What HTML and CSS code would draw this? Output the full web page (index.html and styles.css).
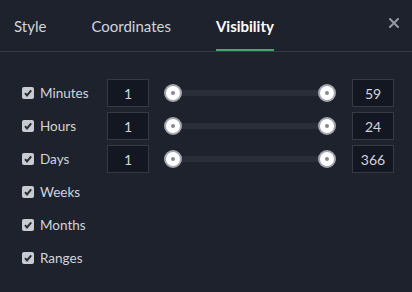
FILE: index.html
```
<!DOCTYPE html>
<html>
<head>
<meta charset="utf-8">
<link rel="stylesheet" href="styles.css">
</head>
<body>
<div class="dialog">
  <div class="header">
    <div class="tab">Style</div>
    <div class="tab">Coordinates</div>
    <div class="tab active">Visibility</div>
    <div class="close"><svg width="10" height="10" viewBox="0 0 10 10"><path d="M1 1L9 9M9 1L1 9" stroke="#9598a1" stroke-width="2" stroke-linecap="square"/></svg></div>
  </div>
  <div class="body">
    <div class="row">
      <label class="lbl"><span class="cb"><svg width="12" height="12" viewBox="0 0 12 12"><path d="M3 6.2L5 8.4L9.2 3.4" fill="none" stroke="#2a2e39" stroke-width="2"/></svg></span>Minutes</label>
      <div class="num">1</div>
      <div class="slider"><span class="track"></span><span class="thumb"></span><span class="thumb"></span></div>
      <div class="num">59</div>
    </div>
    <div class="row">
      <label class="lbl"><span class="cb"><svg width="12" height="12" viewBox="0 0 12 12"><path d="M3 6.2L5 8.4L9.2 3.4" fill="none" stroke="#2a2e39" stroke-width="2"/></svg></span>Hours</label>
      <div class="num">1</div>
      <div class="slider"><span class="track"></span><span class="thumb"></span><span class="thumb"></span></div>
      <div class="num">24</div>
    </div>
    <div class="row">
      <label class="lbl"><span class="cb"><svg width="12" height="12" viewBox="0 0 12 12"><path d="M3 6.2L5 8.4L9.2 3.4" fill="none" stroke="#2a2e39" stroke-width="2"/></svg></span>Days</label>
      <div class="num">1</div>
      <div class="slider"><span class="track"></span><span class="thumb"></span><span class="thumb"></span></div>
      <div class="num">366</div>
    </div>
    <div class="row">
      <label class="lbl"><span class="cb"><svg width="12" height="12" viewBox="0 0 12 12"><path d="M3 6.2L5 8.4L9.2 3.4" fill="none" stroke="#2a2e39" stroke-width="2"/></svg></span>Weeks</label>
    </div>
    <div class="row">
      <label class="lbl"><span class="cb"><svg width="12" height="12" viewBox="0 0 12 12"><path d="M3 6.2L5 8.4L9.2 3.4" fill="none" stroke="#2a2e39" stroke-width="2"/></svg></span>Months</label>
    </div>
    <div class="row">
      <label class="lbl"><span class="cb"><svg width="12" height="12" viewBox="0 0 12 12"><path d="M3 6.2L5 8.4L9.2 3.4" fill="none" stroke="#2a2e39" stroke-width="2"/></svg></span>Ranges</label>
    </div>
  </div>
</div>
</body>
</html>
```
FILE: styles.css
```
html, body {
  margin: 0;
  padding: 0;
  background: #1e222d;
}
body {
  width: 412px;
  height: 292px;
  overflow: hidden;
  font-family: Lato, "Noto Sans", sans-serif;
  color: #d1d4dc;
}
.dialog {
  display: flex;
  flex-direction: column;
}
.header {
  display: flex;
  height: 52px;
  box-sizing: border-box;
  border-bottom: 1px solid #363a45;
  padding-left: 14px;
  position: relative;
}
.tab {
  display: flex;
  align-items: center;
  padding-top: 2px;
  margin-right: 45px;
  font-size: 15px;
  color: #d1d4dc;
  border-bottom: 2px solid transparent;
  box-sizing: border-box;
}
.tab.active {
  font-weight: bold;
  color: #ffffff;
  border-bottom-color: #45a874;
}
.close {
  position: absolute;
  right: 13px;
  top: 18px;
  width: 10px;
  height: 10px;
}
.close svg { display: block; }
.body {
  display: flex;
  flex-direction: column;
  gap: 5px;
  padding: 27px 18px 0 22px;
}
.row {
  display: flex;
  align-items: center;
  height: 28px;
}
.lbl {
  display: flex;
  align-items: center;
  width: 85px;
  font-size: 13.5px;
  color: #d1d4dc;
}
.cb {
  width: 12px;
  height: 12px;
  border-radius: 2px;
  background: #c9cbd0;
  margin-right: 6px;
  display: block;
}
.cb svg { display: block; }
.num {
  width: 42px;
  height: 28px;
  box-sizing: border-box;
  background: #131722;
  border: 1px solid #363a45;
  display: flex;
  align-items: center;
  justify-content: center;
  font-size: 14px;
  color: #d1d4dc;
}
.slider {
  width: 172px;
  margin: 0 16px 0 15px;
  height: 18px;
  display: flex;
  justify-content: space-between;
  align-items: center;
  position: relative;
}
.track {
  position: absolute;
  left: 8px;
  right: 8px;
  top: 6px;
  height: 6px;
  background: #2a2e39;
}
.thumb {
  position: relative;
  width: 18px;
  height: 18px;
  box-sizing: border-box;
  border-radius: 50%;
  background: #ffffff;
  border: 2px solid #a3a6af;
}
.thumb::after {
  content: "";
  position: absolute;
  left: 5px;
  top: 5px;
  width: 4px;
  height: 4px;
  border-radius: 50%;
  background: #868993;
}
```
